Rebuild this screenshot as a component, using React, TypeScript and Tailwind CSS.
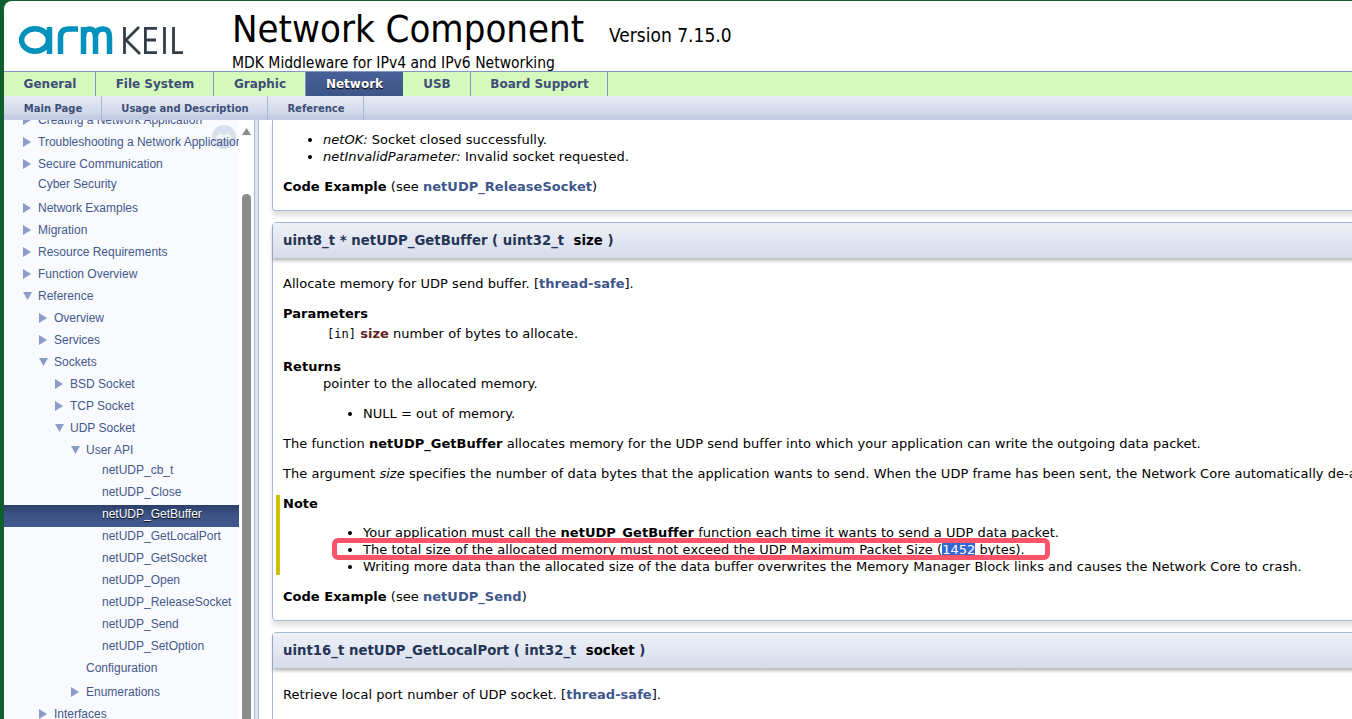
const topTabs = [
  { label: "General", w: "w-[92px]" },
  { label: "File System", w: "w-[118px]" },
  { label: "Graphic", w: "w-[92px]" },
  { label: "Network", w: "w-[97px]", active: true },
  { label: "USB", w: "w-[68px]" },
  { label: "Board Support", w: "w-[137px]" },
];

const subTabs = [
  { label: "Main Page", w: "w-[98px]" },
  { label: "Usage and Description", w: "w-[166px]" },
  { label: "Reference", w: "w-[96px]" },
];

const navRows = [
  { label: "Troubleshooting a Network Application", depth: 0, arrow: "right" },
  { label: "Secure Communication", depth: 0, arrow: "right" },
  { label: "Cyber Security", depth: 0, extra: "-mt-[2px] mb-[2px]" },
  { label: "Network Examples", depth: 0, arrow: "right" },
  { label: "Migration", depth: 0, arrow: "right" },
  { label: "Resource Requirements", depth: 0, arrow: "right" },
  { label: "Function Overview", depth: 0, arrow: "right" },
  { label: "Reference", depth: 0, arrow: "down" },
  { label: "Overview", depth: 1, arrow: "right" },
  { label: "Services", depth: 1, arrow: "right" },
  { label: "Sockets", depth: 1, arrow: "down" },
  { label: "BSD Socket", depth: 2, arrow: "right" },
  { label: "TCP Socket", depth: 2, arrow: "right" },
  { label: "UDP Socket", depth: 2, arrow: "down" },
  { label: "User API", depth: 3, arrow: "down", extra: "mb-[-2px]" },
  { label: "netUDP_cb_t", depth: 4 },
  { label: "netUDP_Close", depth: 4 },
  { label: "netUDP_GetBuffer", depth: 4, active: true, extra: "mt-[2px] mb-[-2px] pb-[4px]" },
  { label: "netUDP_GetLocalPort", depth: 4 },
  { label: "netUDP_GetSocket", depth: 4 },
  { label: "netUDP_Open", depth: 4 },
  { label: "netUDP_ReleaseSocket", depth: 4 },
  { label: "netUDP_Send", depth: 4 },
  { label: "netUDP_SetOption", depth: 4 },
  { label: "Configuration", depth: 3, extra: "mb-[2px]" },
  { label: "Enumerations", depth: 3, arrow: "right" },
  { label: "Interfaces", depth: 1, arrow: "right" },
];

const Arrow = ({ dir }: { dir?: string }) => {
  if (dir === "right") {
    return (
      <svg width="8" height="10" viewBox="0 0 8 10" className="shrink-0">
        <path d="M0 0 L8 5 L0 10 Z" fill="#8b9dc8" />
      </svg>
    );
  }
  if (dir === "down") {
    return (
      <svg width="9" height="8" viewBox="0 0 9 8" className="shrink-0">
        <path d="M0 0 L9 0 L4.5 8 Z" fill="#8b9dc8" />
      </svg>
    );
  }
  return null;
};

const NavRow = ({ row }: { row: (typeof navRows)[number] & { active?: boolean } }) => {
  const pad = ["pl-[19px]", "pl-[35px]", "pl-[51px]", "pl-[67px]", "pl-[83px]"][row.depth];
  return (
    <div
      className={`relative z-10 flex h-[22px] shrink-0 items-center whitespace-nowrap ${pad} ${row.extra ?? ""} ${
        row.active
          ? "bg-gradient-to-b from-[#2b3f68] via-[#3c5488] to-[#41598e] text-white [text-shadow:0_1px_1px_#000]"
          : "text-[#44588c]"
      }`}
    >
      <span className="flex w-[15px] shrink-0 items-center">
        <Arrow dir={row.arrow} />
      </span>
      <span>{row.label}</span>
    </div>
  );
};

const Sidebar = () => (
  <div className="flex w-[250px] shrink-0 overflow-hidden">
    <div className="relative flex w-[235px] shrink-0 flex-col overflow-hidden bg-[#f9fafd] font-['Liberation_Sans',sans-serif] text-[12px]">
      <div className="absolute left-[208px] top-[5px] flex h-[24px] w-[24px] items-center justify-center rounded-full bg-[#d9e0ed]">
        <svg width="18" height="12" viewBox="0 0 18 12">
          <path d="M1 6 L6 1 L6 4 L12 4 L12 1 L17 6 L12 11 L12 8 L6 8 L6 11 Z" fill="#f4f6fb" />
        </svg>
      </div>
      <div className="-mt-[11px] flex flex-col">
        <NavRow row={{ label: "Creating a Network Application", depth: 0, arrow: "right" }} />
        {navRows.map((row) => (
          <NavRow key={row.label + row.depth} row={row} />
        ))}
      </div>
    </div>
    <div className="relative w-[15px] shrink-0 bg-white">
      <div className="absolute left-[3px] top-[74px] h-[600px] w-[9px] rounded-full bg-[#8c8c8c]" />
      <svg width="9" height="7" viewBox="0 0 9 7" className="absolute left-[3px] top-[8px]">
        <path d="M0 7 L4.5 0 L9 7 Z" fill="#8c8c8c" />
      </svg>
    </div>
  </div>
);

const Bullets = ({ children, className = "" }: { children: React.ReactNode; className?: string }) => (
  <ul className={`list-disc leading-[17px] ${className}`}>{children}</ul>
);

const Link = ({ children }: { children: React.ReactNode }) => (
  <span className="font-bold text-[#3d578c]">{children}</span>
);

const CardHead = ({ children }: { children: React.ReactNode }) => (
  <div className="flex h-[35px] items-center whitespace-pre bg-gradient-to-b from-[#eef1f7] to-[#d6dcec] pl-[10px] text-[13.25px] font-bold text-[#253555] shadow-[0_3px_3px_rgba(0,0,0,0.25)]">
    {children}
  </div>
);

const Content = () => (
  <div className="relative min-w-0 flex-1 overflow-hidden bg-white font-['DejaVu_Sans',sans-serif] text-[13px] tracking-[0.03px] text-black">
    <div className="w-[1200px] pl-[13px]">
      <div className="h-[91px] rounded-b-[4px] border-x border-b border-[#a8b8d9] pl-[10px] shadow-[0_5px_5px_rgba(0,0,0,0.12)]">
        <Bullets className="pl-[40px] pt-[11px]">
          <li>
            <em>netOK:</em> Socket closed successfully.
          </li>
          <li>
            <em>netInvalidParameter:</em> Invalid socket requested.
          </li>
        </Bullets>
        <p className="mt-[13px] leading-[17px]">
          <b>Code Example</b> (see <Link>netUDP_ReleaseSocket</Link>)
        </p>
      </div>

      <div className="mt-[11px] h-[399px] rounded-[4px] border border-[#a8b8d9] shadow-[0_5px_5px_rgba(0,0,0,0.12)]">
        <CardHead>
          uint8_t * netUDP_GetBuffer ( uint32_t  <span className="text-black">size</span> )
        </CardHead>
        <div className="pl-[10px]">
          <p className="mt-[17px] leading-[17px]">
            Allocate memory for UDP send buffer. [<Link>thread-safe</Link>].
          </p>
          <p className="mt-[13px] font-bold leading-[17px]">Parameters</p>
          <p className="mt-[3px] pl-[44px] leading-[17px]">
            <span className="font-['DejaVu_Sans_Mono',monospace] text-[12px]">[in]</span>{" "}
            <b className="text-[#602020]">size</b> number of bytes to allocate.
          </p>
          <p className="mt-[15px] font-bold leading-[17px]">Returns</p>
          <p className="pl-[40px] leading-[17px]">pointer to the allocated memory.</p>
          <Bullets className="mt-[13px] pl-[80px]">
            <li>NULL = out of memory.</li>
          </Bullets>
          <p className="mt-[13px] leading-[17px]">
            The function <b>netUDP_GetBuffer</b> allocates memory for the UDP send buffer into which your application can write the outgoing data packet.
          </p>
          <p className="mt-[13px] whitespace-nowrap leading-[17px]">
            The argument <em>size</em> specifies the number of data bytes that the application wants to send. When the UDP frame has been sent, the Network Core automatically de-allocates the memory.
          </p>
          <div className="-ml-[7px] mt-[13px] h-[80px] border-l-[4px] border-[#d0c000] pl-[3px]">
            <p className="font-bold leading-[17px]">Note</p>
            <Bullets className="mt-[12px] pl-[80px]">
              <li>
                Your application must call the <b>netUDP_GetBuffer</b> function each time it wants to send a UDP data packet.
              </li>
              <li>
                The total size of the allocated memory must not exceed the UDP Maximum Packet Size (
                <span className="bg-[#3367d1] text-white">1452</span> bytes).
              </li>
              <li>Writing more data than the allocated size of the data buffer overwrites the Memory Manager Block links and causes the Network Core to crash.</li>
            </Bullets>
          </div>
          <p className="mt-[13px] leading-[17px]">
            <b>Code Example</b> (see <Link>netUDP_Send</Link>)
          </p>
        </div>
      </div>

      <div className="mt-[11px] h-[200px] rounded-[4px] border border-[#a8b8d9]">
        <CardHead>
          uint16_t netUDP_GetLocalPort ( int32_t  <span className="text-black">socket</span> )
        </CardHead>
        <p className="mt-[18px] pl-[10px] leading-[17px]">
          Retrieve local port number of UDP socket. [<Link>thread-safe</Link>].
        </p>
      </div>
    </div>
    {/* red annotation box drawn on top of the screenshot */}
    <div className="absolute left-[73px] top-[418px] h-[22px] w-[718px] rounded-[6px] border-[5px] border-[#f9546a]" />
  </div>
);

export default function App() {
  return (
    <div className="h-[719px] w-[1352px] overflow-hidden bg-[#0f5f2e] pl-[4px] pt-[1px]">
      <div className="flex h-[718px] flex-col overflow-hidden rounded-tl-[8px] bg-white">
        <div className="flex h-[70px] shrink-0">
          <div className="w-[228px] shrink-0 pl-[15px] pt-[18px]">
            <svg width="170" height="40" viewBox="19 19 170 40">
              <g fill="none" stroke="#0091bd" strokeWidth="5.5">
                <ellipse cx="35" cy="40" rx="13.5" ry="11.2" />
                <path d="M49.5 27 V54" />
                <path d="M60.5 54 V37 Q60.5 29 69 29 H78" />
                <path d="M83.5 54 V27 M83.5 37 Q83.5 29 89.5 29 Q95.5 29 95.5 37 V54 M95.5 37 Q95.5 29 103 29 Q109.5 29 109.5 37 V54" />
              </g>
              <g fill="none" stroke="#333e48" strokeWidth="2.8">
                <path d="M124.5 27 V54 M139 27 L126 40 L140 54" />
                <path d="M157 28.4 H145.4 V52.6 H157 M145.4 40 H156" />
                <path d="M164.5 27 V54" />
                <path d="M173.5 27 V52.6 H183" />
              </g>
            </svg>
          </div>
          <div className="font-['DejaVu_Sans_Condensed','DejaVu_Sans',sans-serif] text-black">
            <div className="mt-[1px] flex items-baseline">
              <span className="text-[38px] leading-[55px]">Network Component</span>
              <span className="ml-[25px] text-[19px]">Version 7.15.0</span>
            </div>
            <div className="-mt-[4px] text-[15.5px] leading-[20px]">MDK Middleware for IPv4 and IPv6 Networking</div>
          </div>
        </div>

        <div className="flex h-[25px] shrink-0 border-t border-[#8397c4] bg-[#d5f9bc] font-['DejaVu_Sans',sans-serif] text-[12px] font-bold text-[#3d4e77]">
          {topTabs.map((t) => (
            <div
              key={t.label}
              className={`flex items-center justify-center ${t.w} ${
                t.active
                  ? "bg-gradient-to-b from-[#465f97] to-[#3d5588] text-white [text-shadow:0_1px_1px_#000]"
                  : "border-r border-[#8397c4] pl-[1px]"
              }`}
            >
              {t.label}
            </div>
          ))}
        </div>

        <div className="flex h-[24px] shrink-0 border-b-[5px] border-[#c3cde3] bg-gradient-to-b from-[#e8ebf4] to-[#cdd5e8] font-['DejaVu_Sans',sans-serif] text-[10px] font-bold text-[#3d4e77]">
          {subTabs.map((t) => (
            <div key={t.label} className={`-mb-[5px] flex items-center justify-center border-r border-[#a8b8d9] pl-[1px] ${t.w}`}>
              {t.label}
            </div>
          ))}
        </div>

        <div className="flex min-h-0 flex-1">
          <Sidebar />
          <div className="h-full w-[5px] shrink-0 border-x border-[#a8b8d9] bg-[#dfe5f1]" />
          <Content />
        </div>
      </div>
    </div>
  );
}
